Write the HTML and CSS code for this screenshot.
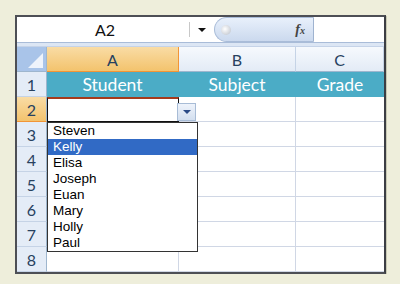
FILE: index.html
```html
<!DOCTYPE html>
<html>
<head>
  <title>Data Validation List</title>
  <link rel="stylesheet" href="styles.css">
</head>
<body>
  <div class="frame">
    <div class="formula-bar">
      <div class="name-box">A2</div>
      <div class="name-drop"><span class="tri"></span></div>
      <div class="fx-pill">
        <span class="knob"></span>
        <span class="fx"><i>f</i><small>x</small></span>
      </div>
      <div class="formula-input"></div>
    </div>
    <div class="bar-gap"></div>

    <div class="sheet">
      <div class="corner"><span class="corner-tri"></span></div>
      <div class="col-head active">A</div>
      <div class="col-head">B</div>
      <div class="col-head last">C</div>

      <div class="row-head">1</div>
      <div class="cell title">Student</div>
      <div class="cell title">Subject</div>
      <div class="cell title last">Grade</div>

      <div class="row-head active">2</div>
      <div class="cell selected">
        <div class="drop-btn"><span class="tri blue"></span></div>
        <ul class="drop-list">
          <li>Steven</li>
          <li class="hl">Kelly</li>
          <li>Elisa</li>
          <li>Joseph</li>
          <li>Euan</li>
          <li>Mary</li>
          <li>Holly</li>
          <li>Paul</li>
        </ul>
      </div>
      <div class="cell"></div>
      <div class="cell last"></div>

      <div class="row-head">3</div>
      <div class="cell"></div><div class="cell"></div><div class="cell last"></div>
      <div class="row-head">4</div>
      <div class="cell"></div><div class="cell"></div><div class="cell last"></div>
      <div class="row-head">5</div>
      <div class="cell"></div><div class="cell"></div><div class="cell last"></div>
      <div class="row-head">6</div>
      <div class="cell"></div><div class="cell"></div><div class="cell last"></div>
      <div class="row-head">7</div>
      <div class="cell"></div><div class="cell"></div><div class="cell last"></div>
      <div class="row-head">8</div>
      <div class="cell"></div><div class="cell"></div><div class="cell last"></div>
    </div>
  </div>
</body>
</html>
```
FILE: styles.css
```css
body {
  margin: 0;
  padding: 15px 0 0 15px;
  background: #eeeedb;
  font-family: Lato, "Liberation Sans", sans-serif;
}
.frame {
  width: 367px;
  border: 2px solid #4d4f55;
  border-right-color: #3c3e44;
  background: #fff;
  box-shadow: 1px 1px 0 #c9c9b4;
}

/* formula bar */
.formula-bar {
  display: flex;
  height: 25px;
  background: #fff;
}
.name-box {
  width: 172px;
  line-height: 25px;
  text-align: center;
  font-size: 16px;
  color: #111;
  padding-left: 4px;
  box-sizing: border-box;
}
.name-drop {
  width: 24px;
  display: flex;
  align-items: center;
  justify-content: center;
  border-left: 1px solid #c8c8c8;
  margin: 5px 0;
}
.tri {
  width: 0;
  height: 0;
  border-left: 4px solid transparent;
  border-right: 4px solid transparent;
  border-top: 4px solid #111;
}
.tri.blue { border-top-color: #2a4a86; }
.fx-pill {
  width: 100px;
  display: flex;
  align-items: center;
  justify-content: space-between;
  padding: 0 8px 0 6px;
  box-sizing: border-box;
  border-radius: 13px 0 0 13px;
  background: linear-gradient(#e8f0fb, #cbd9ee);
  border: 1px solid #a9bcd8;
  border-right-color: #9fb3d0;
}
.knob {
  width: 10px;
  height: 10px;
  border-radius: 50%;
  background: radial-gradient(circle at 40% 40%, #fff, #b8bec8);
}
.fx {
  font-family: "Liberation Serif", serif;
  font-size: 14px;
  color: #444;
  font-weight: bold;
}
.fx small { font-size: 10px; font-style: italic; }
.formula-input { flex: 1; }
.bar-gap {
  height: 3px;
  background: #dce6f4;
  border-top: 1px solid #a9bcd8;
  border-bottom: 1px solid #c5d3e8;
}

/* sheet grid */
.sheet {
  display: grid;
  grid-template-columns: 30px 132px 117px 88px;
  grid-auto-rows: 25px;
}
.corner {
  position: relative;
  background: #a9c4e9;
  border-right: 1px solid #9eb6ce;
  border-bottom: 1px solid #9eb6ce;
}
.corner-tri {
  position: absolute;
  right: 3px;
  bottom: 3px;
  border-left: 15px solid transparent;
  border-bottom: 15px solid #eef3fb;
}
.col-head {
  display: flex;
  align-items: center;
  justify-content: center;
  font-size: 16px;
  color: #27415f;
  background: linear-gradient(#f6f9fd, #e3ebf6);
  border-right: 1px solid #c5d3e6;
  border-bottom: 1px solid #9eb6ce;
}
.col-head.active {
  background: linear-gradient(#f9dca5, #f3c36d);
  border-right-color: #f29536;
  border-bottom-color: #f29536;
}
.row-head {
  display: flex;
  align-items: center;
  justify-content: center;
  font-size: 16px;
  color: #27415f;
  background: #e4ecf7;
  border-right: 1px solid #9eb6ce;
  border-bottom: 1px solid #c5d3e6;
}
.row-head.active {
  background: linear-gradient(#f9dca5, #f3c36d);
  border-bottom-color: #f29536;
}
.cell {
  border-right: 1px solid #d0d7e5;
  border-bottom: 1px solid #d0d7e5;
}
.cell.last { border-right: none; }
.cell.title {
  display: flex;
  align-items: center;
  justify-content: center;
  background: #4bacc6;
  color: #fff;
  font-size: 17.5px;
  border-right-color: #4bacc6;
  border-bottom: none;
}

/* selected cell with validation list */
.cell.selected {
  position: relative;
  border: 1px solid #111;
  border-top: 2px solid #a53a1c;
}
.drop-btn {
  position: absolute;
  left: 129px;
  top: 4px;
  width: 19px;
  height: 18px;
  display: flex;
  align-items: center;
  justify-content: center;
  background: linear-gradient(#eef3fb, #d3dfef);
  border: 1px solid #a8bcd6;
  box-sizing: border-box;
  z-index: 2;
}
.drop-list {
  position: absolute;
  left: -1px;
  top: 23px;
  width: 149px;
  margin: 0;
  padding: 0;
  list-style: none;
  background: #fff;
  border: 1px solid #333;
  font-family: "Liberation Sans", sans-serif;
  font-size: 13.5px;
  z-index: 3;
}
.drop-list li {
  height: 16px;
  line-height: 16px;
  padding-left: 5px;
  color: #000;
}
.drop-list li.hl {
  background: #316ac5;
  color: #fff;
}
```
